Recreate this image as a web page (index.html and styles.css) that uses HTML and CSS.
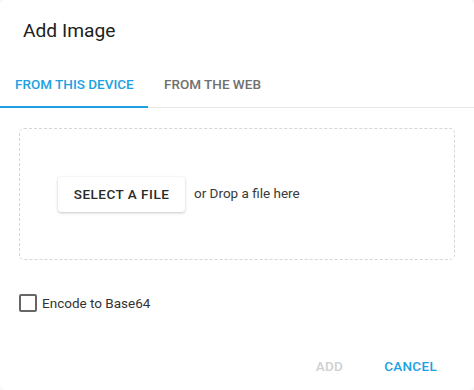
FILE: index.html
```html
<!DOCTYPE html>
<html>
<head>
<meta charset="utf-8">
<link rel="stylesheet" href="styles.css">
</head>
<body>
<div class="dialog">
  <h1 class="title">Add Image</h1>
  <div class="tabs">
    <div class="tab active">FROM THIS DEVICE</div>
    <div class="tab">FROM THE WEB</div>
  </div>
  <div class="content">
    <div class="dropzone">
      <button class="select-btn">SELECT A FILE</button>
      <span class="drop-text">or Drop a file here</span>
    </div>
    <label class="check-row">
      <span class="checkbox"></span>
      <span class="check-label">Encode to Base64</span>
    </label>
  </div>
  <div class="actions">
    <button class="action disabled">ADD</button>
    <button class="action primary">CANCEL</button>
  </div>
</div>
</body>
</html>
```
FILE: styles.css
```css
* { box-sizing: border-box; }
html, body {
  margin: 0;
  padding: 0;
  background: #f7f7f7;
  font-family: Roboto, "Liberation Sans", sans-serif;
}
.dialog {
  width: 474px;
  height: 390px;
  background: #fff;
  border-radius: 5px;
  display: flex;
  flex-direction: column;
  overflow: hidden;
}
.title {
  margin: 0;
  padding: 19px 23px 0;
  height: 59px;
  font-size: 19.2px;
  font-weight: 400;
  line-height: 24px;
  color: #212121;
}
.tabs {
  display: flex;
  border-bottom: 1px solid #e6e6e6;
  height: 49px;
}
.tab {
  height: 48px;
  display: flex;
  align-items: center;
  white-space: nowrap;
  padding: 2px 16px 0 16px;
  font-size: 13.5px;
  font-weight: 500;
  color: #707070;
}
.tab.active {
  color: #1da1e2;
  width: 148px;
  padding-left: 15px;
  border-bottom: 2px solid #1da1e2;
  margin-bottom: -1px;
  height: 49px;
}
.content {
  padding: 20px 19px 0;
  flex: 1;
}
.dropzone {
  height: 132px;
  border: 1px dashed #d6d6d6;
  border-radius: 5px;
  display: flex;
  align-items: center;
  padding-left: 38px;
}
.select-btn {
  height: 35px;
  width: 127px;
  border: none;
  background: #fff;
  border-radius: 3px;
  box-shadow: 0 1px 3px rgba(0,0,0,0.22), 0 0 1px rgba(0,0,0,0.08);
  font-family: inherit;
  font-size: 13.5px;
  font-weight: 500;
  letter-spacing: 0.5px;
  color: #2a2a2a;
  padding: 0;
}
.drop-text {
  margin-left: 9px;
  margin-top: -2px;
  font-size: 13.5px;
  color: #3a3a3a;
}
.check-row {
  display: flex;
  align-items: center;
  margin-top: 34px;
  height: 18px;
}
.checkbox {
  width: 18px;
  height: 18px;
  border: 2px solid #666;
  border-radius: 2px;
}
.check-label {
  margin-left: 5px;
  font-size: 13.5px;
  color: #333;
}
.actions {
  display: flex;
  justify-content: flex-end;
  align-items: center;
  height: 36px;
  margin-bottom: 6px;
  padding-right: 21px;
}
.action {
  border: none;
  background: none;
  font-family: inherit;
  font-size: 13.5px;
  font-weight: 500;
  letter-spacing: 0.3px;
  padding: 0 16px;
  height: 36px;
}
.action.disabled { color: #d0d0d0; }
.action.primary { color: #1da1e2; margin-left: 9px; }
```
